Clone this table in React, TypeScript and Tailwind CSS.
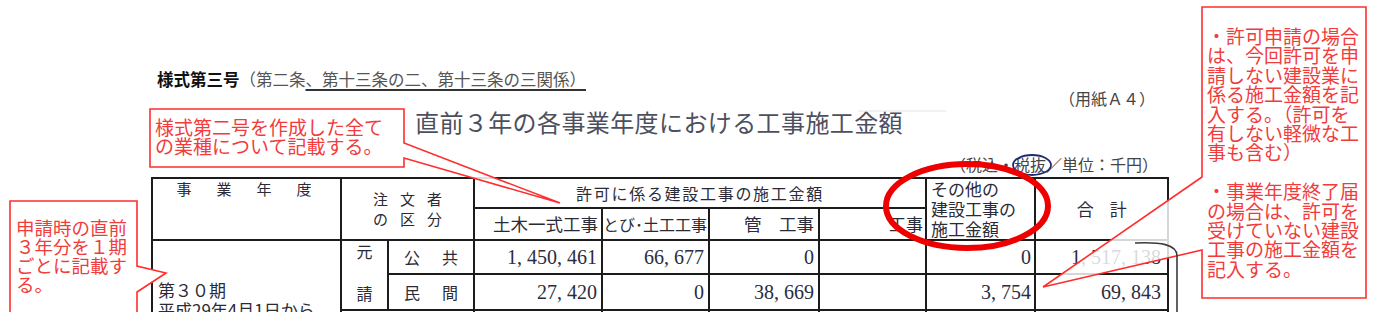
const jp = "font-['Noto_Sans_CJK_JP','Noto_Sans',sans-serif]";
const num = "font-['Liberation_Serif','Noto_Sans_CJK_JP',serif] text-[20px] leading-none text-[#2a2d40]";
const cell = "border-2 border-[#1c1c1c] p-0";

function Amount({ value, pr = "pr-[4px]" }: { value: string; pr?: string }) {
  return <td className={`${cell} ${num} ${pr} text-right`}>{value}</td>;
}

function Callouts() {
  return (
    <svg className="pointer-events-none absolute inset-0" width="1381" height="312" viewBox="0 0 1381 312">
      <line x1="858" y1="111" x2="946" y2="111" stroke="#e4e4e4" strokeWidth="1" />
      <path
        d="M150 109 H404 V143 L560 203 L404 158 V167 H150 Z"
        fill="#fff"
        fillOpacity="0.85"
        stroke="#ff2e2e"
        strokeWidth="1.6"
      />
      <path
        d="M10 330 V201 H137 V266 L166 273 L137 292 V330"
        fill="#fff"
        stroke="#ff2e2e"
        strokeWidth="1.6"
      />
      <path
        d="M1202 7 H1366 V298 H1202 V250 L1043 287 L1202 177 Z"
        fill="#fff"
        fillOpacity="0.82"
        stroke="#ff2e2e"
        strokeWidth="1.6"
      />
      <path d="M1135 243 C1160 242 1177 244 1177 256 V312" fill="none" stroke="#3a3a3a" strokeWidth="1.6" />
      <ellipse cx="1032" cy="165" rx="19" ry="10" fill="none" stroke="#1f2a70" strokeWidth="1.8" />
      <ellipse cx="967" cy="206" rx="81" ry="42" fill="none" stroke="#ee0000" strokeWidth="6" />
    </svg>
  );
}

export default function App() {
  return (
    <div className={`relative h-[312px] w-[1381px] overflow-hidden bg-white ${jp}`}>
      <div className="mt-[69px] flex h-[20px] items-center pl-[157px] text-[16.5px] leading-[20px]">
        <span className="font-bold text-[#111]">様式第三号</span>
        <span className="text-[#555]">
          （第二条<span className="underline decoration-[#333] decoration-[1.5px] underline-offset-[3px]">、第十三条の二、第十三条の三関係）</span>
        </span>
      </div>

      <div className="flex h-[18px] justify-end pr-[226px] text-[16px] leading-[18px] text-[#444]">（用紙Ａ４）</div>

      <div className="h-[30px] pl-[415px] text-[24px] leading-[30px] tracking-[0.4px] text-[#4d4f5e]">
        直前３年の各事業年度における工事施工金額
      </div>

      <div className="mt-[17px] flex h-[20px] justify-end pr-[223px] text-[16px] leading-[20px] text-[#444]">
        （税込・税抜／単位：千円）
      </div>

      <table className="mt-[3px] ml-[151px] w-[1016px] table-fixed border-collapse text-[#2b2b38]">
        <colgroup>
          <col className="w-[189px]" />
          <col className="w-[47px]" />
          <col className="w-[86px]" />
          <col className="w-[128px]" />
          <col className="w-[107px]" />
          <col className="w-[110px]" />
          <col className="w-[107px]" />
          <col className="w-[109px]" />
          <col className="w-[133px]" />
        </colgroup>
        <tbody>
          <tr className="h-[30px]">
            <td rowSpan={2} className={`${cell} align-top text-center text-[15px] leading-[20px] tracking-[5px]`}>
              事　業　年　度
            </td>
            <td rowSpan={2} colSpan={2} className={`${cell} pl-[12px] text-center text-[15px] leading-[20px] tracking-[12px]`}>
              注文者
              <br />
              の区分
            </td>
            <td colSpan={4} className={`${cell} text-center text-[16px] leading-[20px] tracking-[1.7px]`}>
              許可に係る建設工事の施工金額
            </td>
            <td rowSpan={2} className={`${cell} pl-[4px] text-[17px] leading-[20px]`}>
              その他の
              <br />
              建設工事の
              <br />
              施工金額
            </td>
            <td rowSpan={2} className={`${cell} text-center text-[17px] leading-[20px] tracking-[-0.5px]`}>
              合　計
            </td>
          </tr>
          <tr className="h-[31px]">
            <td className={`${cell} pr-[3px] text-right text-[17.5px] leading-[20px]`}>土木一式工事</td>
            <td className={`${cell} pr-[1px] text-right text-[16px] leading-[20px]`}>とび･土工工事</td>
            <td className={`${cell} pr-[4px] text-right text-[17.5px] leading-[20px]`}>管　工事</td>
            <td className={`${cell} pr-[2px] text-right text-[17px] leading-[20px]`}>工事</td>
          </tr>
          <tr className="h-[34px]">
            <td rowSpan={3} className={`${cell} pl-[5px] pt-[39px] align-top text-[17px] leading-[20px]`}>
              第３０期
              <br />
              平成29年4月1日から
            </td>
            <td rowSpan={2} className={`${cell} align-top text-center text-[16px] leading-[20px]`}>
              元
              <div className="mt-[22px]">請</div>
            </td>
            <td className={`${cell} pl-[3px] text-center text-[16px] leading-[20px] tracking-[3px]`}>公　共</td>
            <Amount value="1, 450, 461" />
            <Amount value="66, 677" />
            <Amount value="0" />
            <td className={cell} />
            <Amount value="0" pr="pr-[3px]" />
            <Amount value="1, 517, 138" pr="pr-[6px]" />
          </tr>
          <tr className="h-[36px]">
            <td className={`${cell} pl-[3px] text-center text-[16px] leading-[20px] tracking-[3px]`}>民　間</td>
            <Amount value="27, 420" />
            <Amount value="0" />
            <Amount value="38, 669" />
            <td className={cell} />
            <Amount value="3, 754" pr="pr-[3px]" />
            <Amount value="69, 843" pr="pr-[6px]" />
          </tr>
          <tr className="h-[36px]">
            <td colSpan={2} className={cell} />
            <td className={cell} />
            <td className={cell} />
            <td className={cell} />
            <td className={cell} />
            <td className={cell} />
            <td className={cell} />
          </tr>
        </tbody>
      </table>

      <Callouts />

      <div className="absolute left-[155px] top-[118px] text-[19px] leading-[18.5px] text-[#f23c3c]">
        様式第二号を作成した全て
        <br />
        の業種について記載する。
      </div>

      <div className="absolute left-[16px] top-[218px] text-[18.5px] leading-[19px] text-[#f23c3c]">
        申請時の直前
        <br />
        ３年分を１期
        <br />
        ごとに記載す
        <br />
        る。
      </div>

      <div className="absolute left-[1207px] top-[26px] text-[19px] leading-[19.4px] text-[#f23c3c]">
        ・許可申請の場合
        <br />
        は、今回許可を申
        <br />
        請しない建設業に
        <br />
        係る施工金額を記
        <br />
        入する。（許可を
        <br />
        有しない軽微な工
        <br />
        事も含む）
        <br />
        <br />
        ・事業年度終了届
        <br />
        の場合は、許可を
        <br />
        受けていない建設
        <br />
        工事の施工金額を
        <br />
        記入する。
      </div>
    </div>
  );
}
